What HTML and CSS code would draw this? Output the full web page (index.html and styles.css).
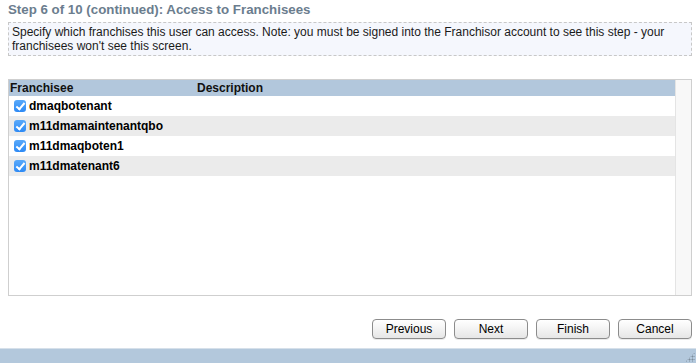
FILE: index.html
```html
<!DOCTYPE html>
<html lang="en">
<head>
  <meta charset="UTF-8">
  <title>Access to Franchisees</title>
  <link rel="stylesheet" href="styles.css">
</head>
<body>
  <div class="wizard">
    <h2 class="step-title">Step 6 of 10 (continued): Access to Franchisees</h2>
    <div class="step-note">
      Specify which franchises this user can access. Note: you must be signed into the Franchisor account to see this step - your franchisees won't see this screen.
    </div>

    <div class="list-box">
      <div class="list-main">
        <div class="list-head">
          <span class="col-name">Franchisee</span>
          <span class="col-desc">Description</span>
        </div>
        <div class="list-row">
          <span class="col-name"><span class="check"></span>dmaqbotenant</span>
          <span class="col-desc"></span>
        </div>
        <div class="list-row">
          <span class="col-name"><span class="check"></span>m11dmamaintenantqbo</span>
          <span class="col-desc"></span>
        </div>
        <div class="list-row">
          <span class="col-name"><span class="check"></span>m11dmaqboten1</span>
          <span class="col-desc"></span>
        </div>
        <div class="list-row">
          <span class="col-name"><span class="check"></span>m11dmatenant6</span>
          <span class="col-desc"></span>
        </div>
      </div>
      <div class="list-scroll"></div>
    </div>

    <div class="wizard-buttons">
      <button>Previous</button>
      <button>Next</button>
      <button>Finish</button>
      <button>Cancel</button>
    </div>
  </div>
  <div class="status-bar"><span class="grip"></span></div>
</body>
</html>
```

FILE: styles.css
```css
* {
  box-sizing: border-box;
  margin: 0;
  padding: 0;
}
html, body {
  height: 100%;
  overflow: hidden;
}
body {
  font-family: "Liberation Sans", Arial, sans-serif;
  font-size: 12px;
  color: #000;
  background: #fff;
  display: flex;
  flex-direction: column;
}
.wizard {
  flex-grow: 1;
  padding: 2px 4px 0 8px;
}
.step-title {
  font-size: 13.3px;
  font-weight: bold;
  color: #6b7d8e;
  line-height: 16px;
}
.step-note {
  margin-top: 4px;
  height: 34px;
  padding: 2px 3px;
  line-height: 14px;
  background: #f5f7fd;
  border: 1px dashed #c8c8c8;
  color: #1a1a1a;
}
.list-box {
  margin-top: 23px;
  height: 217px;
  display: flex;
  border: 1px solid #cfcfcf;
}
.list-main {
  flex-grow: 1;
}
.list-scroll {
  width: 16px;
  background: #f8f8f8;
  border-left: 1px solid #e4e4e4;
}
.list-head,
.list-row {
  display: flex;
  align-items: center;
  font-weight: bold;
  padding-left: 1px;
}
.list-head {
  height: 16px;
  background: #b2c7dc;
  color: #111;
}
.list-row {
  height: 20px;
  background: #fff;
}
.list-row:nth-child(odd) {
  background: #ebebeb;
}
.col-name {
  width: 187px;
  display: flex;
  align-items: center;
}
.check {
  display: inline-block;
  width: 12px;
  height: 12px;
  margin: 0 3px 0 4px;
  border-radius: 3px;
  background: linear-gradient(#58a9fb, #2d8af5);
  position: relative;
}
.check::after {
  content: "";
  position: absolute;
  left: 4px;
  top: 1px;
  width: 3px;
  height: 7px;
  border: solid #fff;
  border-width: 0 2px 2px 0;
  transform: rotate(40deg);
}
.wizard-buttons {
  display: flex;
  justify-content: flex-end;
  gap: 8px;
  margin-top: 23px;
}
.wizard-buttons button {
  width: 74px;
  height: 20px;
  font-family: "Liberation Sans", Arial, sans-serif;
  font-size: 12px;
  color: #000;
  border: 1px solid #8c8c8c;
  border-radius: 4px;
  background: linear-gradient(#ffffff, #f3f3f3 50%, #e6e6e6);
  box-shadow: 0 1px 0 rgba(0, 0, 0, 0.08);
  cursor: pointer;
}
.status-bar {
  height: 15px;
  background: #b3c8dc;
  border-top: 1px solid #d6e0ea;
  position: relative;
}
.grip {
  position: absolute;
  right: 1px;
  bottom: 1px;
  width: 10px;
  height: 10px;
  background: radial-gradient(circle, #7e8d9c 0.8px, transparent 1.2px) 0 0 / 3px 3px;
  clip-path: polygon(100% 0, 100% 100%, 0 100%);
}
```
